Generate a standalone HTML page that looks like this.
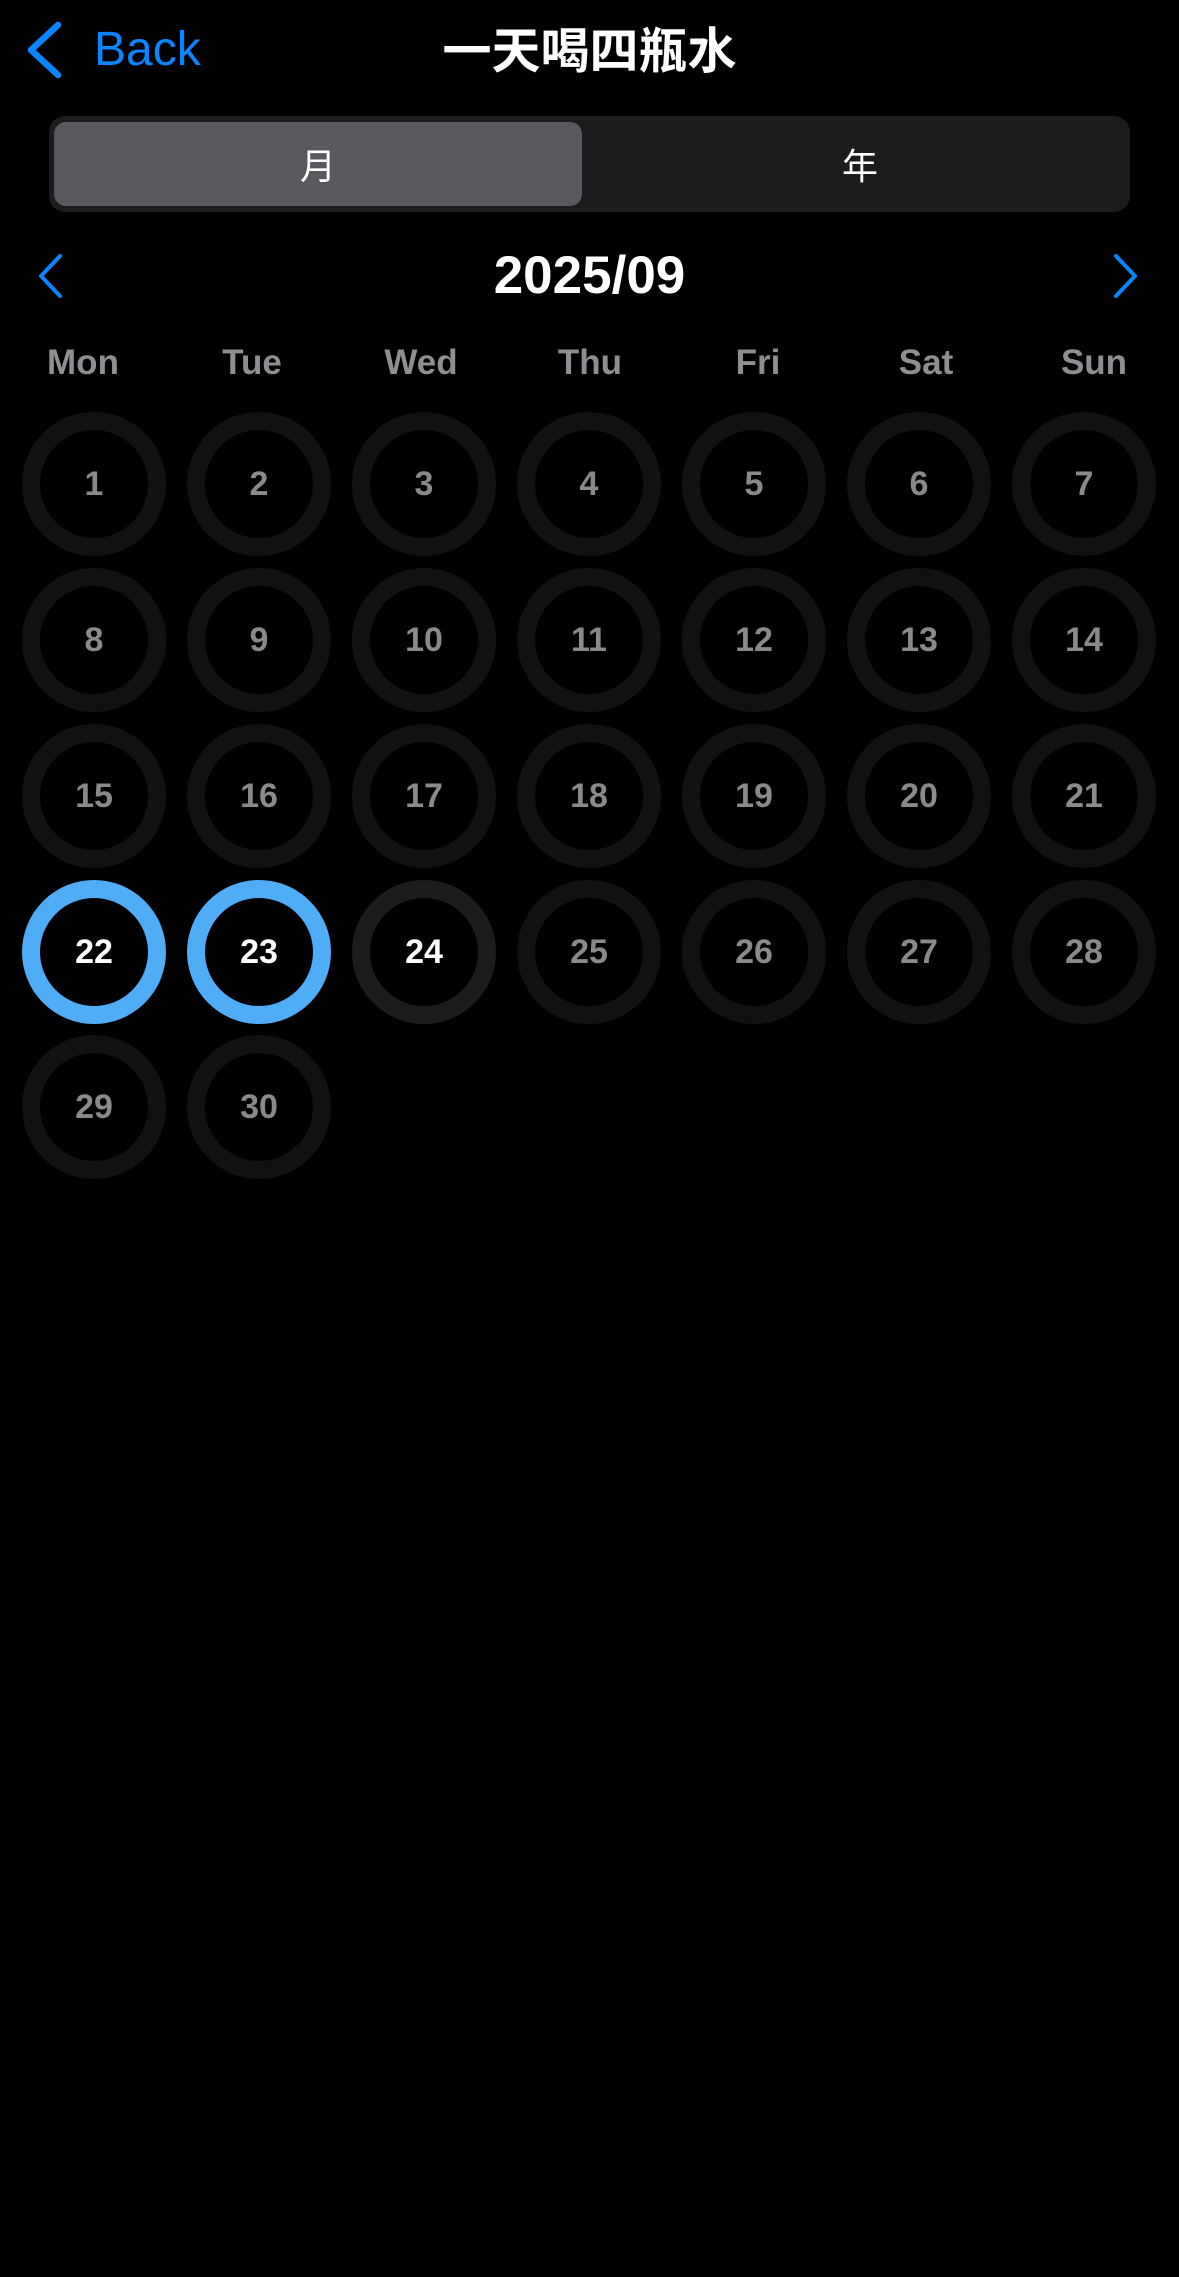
<!DOCTYPE html>
<html><head><meta charset="utf-8"><style>
*{margin:0;padding:0;box-sizing:border-box}
body{width:1179px;height:2277px;background:#000;position:relative;overflow:hidden;font-family:"Liberation Sans","Noto Sans CJK SC",sans-serif;color:#fff}
.abs{position:absolute}
.back{left:94px;top:18px;font-size:48px;color:#0a84ff;line-height:64px}
.title{left:0;width:1179px;text-align:center;top:14px;font-size:49px;font-weight:bold;line-height:68px;font-family:"Noto Sans CJK SC",sans-serif}
.seg{left:49px;top:116px;width:1081px;height:96px;background:#1c1c1e;border-radius:16px}
.sel{left:54px;top:122px;width:528px;height:84px;background:#5a5a5e;border-radius:12px}
.lbl{top:122px;height:84px;line-height:84px;text-align:center;font-size:36px;font-family:"Noto Sans CJK SC",sans-serif}
.month{left:0;width:1179px;text-align:center;top:240px;font-size:53px;line-height:72px;font-weight:bold}
.wd{top:340px;width:120px;text-align:center;font-size:35px;font-weight:bold;color:#8e8e93;line-height:46px}
.day{width:144px;height:144px;border-radius:50%;border:18px solid #111;display:flex;align-items:center;justify-content:center;font-size:34px;color:#8a8a8a;font-weight:bold}
.blue{border-color:#4facf7;color:#fff}
.today{border-color:#1c1c1c;color:#fff}
</style></head><body>
<svg class="abs" style="left:0;top:0" width="80" height="100"><polyline points="58,25 31,50 58,75" fill="none" stroke="#0a84ff" stroke-width="6.5" stroke-linecap="round" stroke-linejoin="round"/></svg>
<div class="abs back">Back</div>
<div class="abs title">一天喝四瓶水</div>
<div class="abs seg"></div>
<div class="abs sel"></div>
<div class="abs lbl" style="left:54px;width:528px">月</div>
<div class="abs lbl" style="left:590px;width:540px">年</div>
<svg class="abs" style="left:0;top:240px" width="1179" height="72"><polyline points="60,16 41,36 60,56" fill="none" stroke="#0a84ff" stroke-width="4" stroke-linecap="round" stroke-linejoin="round"/><polyline points="1116,16 1135,36 1116,56" fill="none" stroke="#0a84ff" stroke-width="4" stroke-linecap="round" stroke-linejoin="round"/></svg>
<div class="abs month">2025/09</div>
<div class="abs wd" style="left:23px">Mon</div>
<div class="abs wd" style="left:192px">Tue</div>
<div class="abs wd" style="left:361px">Wed</div>
<div class="abs wd" style="left:530px">Thu</div>
<div class="abs wd" style="left:698px">Fri</div>
<div class="abs wd" style="left:866px">Sat</div>
<div class="abs wd" style="left:1034px">Sun</div>
<div class="abs day" style="left:22px;top:412px">1</div>
<div class="abs day" style="left:187px;top:412px">2</div>
<div class="abs day" style="left:352px;top:412px">3</div>
<div class="abs day" style="left:517px;top:412px">4</div>
<div class="abs day" style="left:682px;top:412px">5</div>
<div class="abs day" style="left:847px;top:412px">6</div>
<div class="abs day" style="left:1012px;top:412px">7</div>
<div class="abs day" style="left:22px;top:568px">8</div>
<div class="abs day" style="left:187px;top:568px">9</div>
<div class="abs day" style="left:352px;top:568px">10</div>
<div class="abs day" style="left:517px;top:568px">11</div>
<div class="abs day" style="left:682px;top:568px">12</div>
<div class="abs day" style="left:847px;top:568px">13</div>
<div class="abs day" style="left:1012px;top:568px">14</div>
<div class="abs day" style="left:22px;top:724px">15</div>
<div class="abs day" style="left:187px;top:724px">16</div>
<div class="abs day" style="left:352px;top:724px">17</div>
<div class="abs day" style="left:517px;top:724px">18</div>
<div class="abs day" style="left:682px;top:724px">19</div>
<div class="abs day" style="left:847px;top:724px">20</div>
<div class="abs day" style="left:1012px;top:724px">21</div>
<div class="abs day blue" style="left:22px;top:880px">22</div>
<div class="abs day blue" style="left:187px;top:880px">23</div>
<div class="abs day today" style="left:352px;top:880px">24</div>
<div class="abs day" style="left:517px;top:880px">25</div>
<div class="abs day" style="left:682px;top:880px">26</div>
<div class="abs day" style="left:847px;top:880px">27</div>
<div class="abs day" style="left:1012px;top:880px">28</div>
<div class="abs day" style="left:22px;top:1035px">29</div>
<div class="abs day" style="left:187px;top:1035px">30</div>
</body></html>
